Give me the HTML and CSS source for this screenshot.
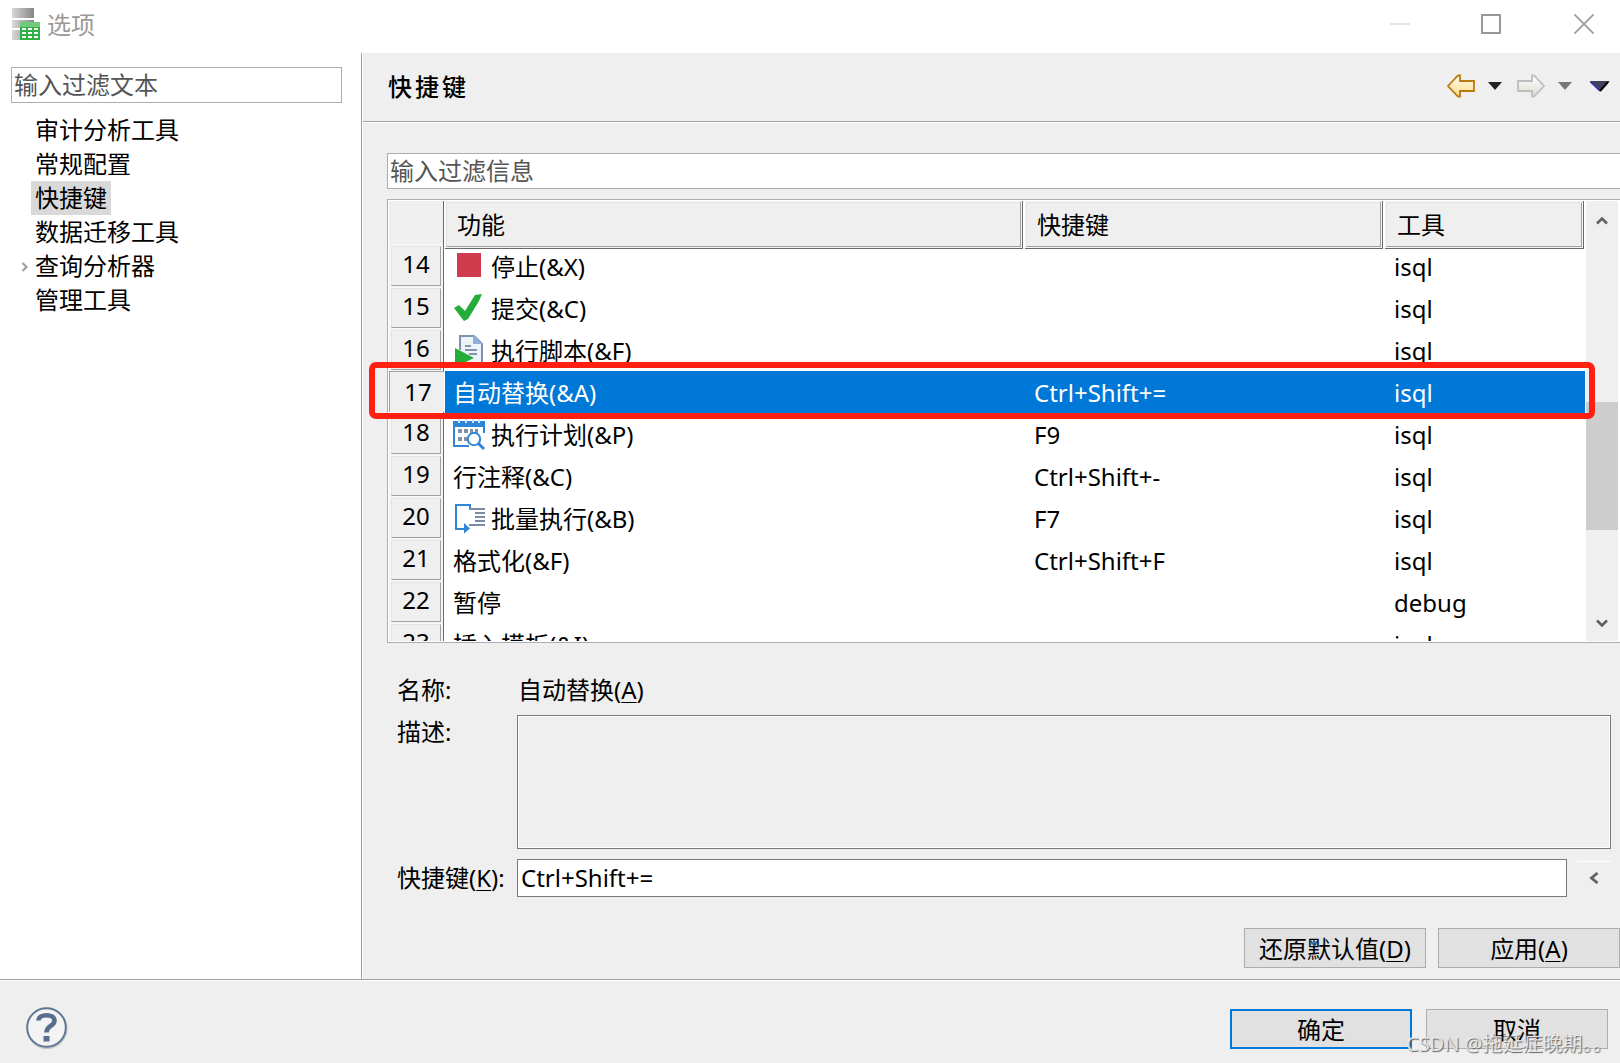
FILE: index.html
```html
<!DOCTYPE html>
<html lang="zh-CN">

<head>
    <meta charset="UTF-8">
    <title>选项</title>
    <link rel="stylesheet" href="styles.css">
</head>

<body>
    <!--标题栏-->
    <div class="titlebar">
        <svg class="logo" width="28" height="32" viewBox="0 0 28 32">
            <defs>
                <linearGradient id="metal">
                    <stop offset="0" stop-color="#d8d8d8" />
                    <stop offset="1" stop-color="#858585" />
                </linearGradient>
            </defs>
            <path fill="url(#metal)" d="M0 0h22v10H0zM0 12h22v8H0zM0 22h12v10H0z" />
            <path fill="#31b045" d="M8 14h20v18H8z" />
            <path fill="#70cc7c" d="M8 14h20v5H8z" />
            <path fill="#fff" d="M10 20h4v2h-4zM16 20h4v2h-4zM22 20h4v2h-4zM10 24h4v2h-4zM16 24h4v2h-4zM22 24h4v2h-4zM10 28h4v2h-4zM16 28h4v2h-4zM22 28h4v2h-4z" />
        </svg>
        <span class="caption">选项</span>
        <div class="win-btns">
            <svg width="20" height="20"><path d="M0 10h20" stroke="#e6e6e6" stroke-width="2" /></svg>
            <svg width="20" height="20"><path d="M1 1h18v18H1z" fill="none" stroke="#999" stroke-width="2" /></svg>
            <svg width="20" height="20"><path d="M.5.5l19 19M19.5.5l-19 19" stroke="#999" stroke-width="1.7" /></svg>
        </div>
    </div>

    <div class="main">
        <!--左侧树-->
        <div class="side">
            <div class="filter">输入过滤文本</div>
            <ul class="tree">
                <li><span>审计分析工具</span></li>
                <li><span>常规配置</span></li>
                <li class="current"><span>快捷键</span></li>
                <li><span>数据迁移工具</span></li>
                <li>
                    <svg class="expand" width="8" height="10"><path d="M1.5 1l4 4-4 4" fill="none" stroke="#a0a0a0" stroke-width="2.2" /></svg>
                    <span>查询分析器</span>
                </li>
                <li><span>管理工具</span></li>
            </ul>
        </div>

        <!--右侧内容-->
        <div class="content">
            <div class="head">
                <h1>快捷键</h1>
                <div class="nav">
                    <svg width="28" height="24" viewBox="0 0 28 24">
                        <defs>
                            <linearGradient id="gold" x2="0" y2="1">
                                <stop offset="0" stop-color="#fffdf0" />
                                <stop offset="1" stop-color="#fbdc86" />
                            </linearGradient>
                        </defs>
                        <path d="M1 12L11 1.5h2V7h14v10H13v5.500h-2z" fill="url(#gold)" stroke="#b97a10" stroke-width="1.800" />
                    </svg>
                    <svg width="14" height="8"><path d="M0 0h14L7 8z" fill="#222" /></svg>
                    <svg width="28" height="24" viewBox="0 0 28 24">
                        <defs>
                            <linearGradient id="silver" x2="0" y2="1">
                                <stop offset="0" stop-color="#fff" />
                                <stop offset="1" stop-color="#dddbd0" />
                            </linearGradient>
                        </defs>
                        <path d="M27 12L17 1.500h-2V7H1v10h14v5.500h2z" fill="url(#silver)" stroke="#bebebe" stroke-width="1.800" />
                    </svg>
                    <svg width="14" height="8"><path d="M0 0h14L7 8z" fill="#77787a" /></svg>
                    <svg width="20" height="11">
                        <path d="M0 0h20L10 10z" fill="#40405f" />
                        <path d="M0 .5L10 10" stroke="#3030b0" stroke-width="1.500" />
                        <path d="M18 1l-8 9" stroke="#000" stroke-width="2" />
                    </svg>
                </div>
            </div>

            <div class="filter wide">输入过滤信息</div>

            <div class="list">
                <div class="grid">
                    <div class="row thead">
                        <div class="num"></div>
                        <div class="th"><b>功能</b></div>
                        <div class="th"><b>快捷键</b></div>
                        <div class="th"><b>工具</b></div>
                    </div>
                    <div class="row">
                        <div class="num"><b>14</b></div>
                        <div class="name">
                            <svg class="ico" width="32" height="32"><path d="M4 2h24v24H4z" fill="#d03c4e" /></svg>停止(&amp;X)
                        </div>
                        <div></div>
                        <div>isql</div>
                    </div>
                    <div class="row">
                        <div class="num"><b>15</b></div>
                        <div class="name">
                            <svg class="ico" width="32" height="32"><path d="M1 15l5-3 6 6L22 2l7-1-3 7-11 18-4 2z" fill="#25ad3a" /></svg>提交(&amp;C)
                        </div>
                        <div></div>
                        <div>isql</div>
                    </div>
                    <div class="row">
                        <div class="num"><b>16</b></div>
                        <div class="name">
                            <svg class="ico" width="32" height="32">
                                <path d="M7 15V1h14l8 8v22H7" fill="#eef3f9" stroke="#7c92b0" stroke-width="2" />
                                <path d="M20 0l10 9H20z" fill="#8fb0dc" />
                                <path d="M12 11h6M12 15h12M16 19h8" stroke="#8494ae" stroke-width="2" />
                                <path d="M2 13l19 10L2 32z" fill="#25ad3a" />
                            </svg>执行脚本(&amp;F)
                        </div>
                        <div></div>
                        <div>isql</div>
                    </div>
                    <div class="row selected">
                        <div class="num"><b>17</b></div>
                        <div class="name">自动替换(&amp;A)</div>
                        <div class="key">Ctrl+Shift+=</div>
                        <div>isql</div>
                    </div>
                    <div class="row">
                        <div class="num"><b>18</b></div>
                        <div class="name">
                            <svg class="ico" width="32" height="32">
                                <path d="M16 27H1V3h30v11" fill="none" stroke="#2f86d8" stroke-width="2" />
                                <path d="M0 2h32v6H0z" fill="#2f86d8" />
                                <path d="M6 0v4M13 0v4M20 0v4M26 0v4" stroke="#cfe2f6" stroke-width="2" />
                                <path d="M5 12h4M11 12h4M17 12h3M22 12h3M5 20h4M11 20h3" stroke="#8190aa" stroke-width="4" />
                                <circle cx="21" cy="20" r="6.200" fill="#fff" stroke="#2f86d8" stroke-width="2" />
                                <path d="M25 24l6 6" stroke="#2f86d8" stroke-width="3" />
                            </svg>执行计划(&amp;P)
                        </div>
                        <div class="key">F9</div>
                        <div>isql</div>
                    </div>
                    <div class="row">
                        <div class="num"><b>19</b></div>
                        <div class="name">行注释(&amp;C)</div>
                        <div class="key">Ctrl+Shift+-</div>
                        <div>isql</div>
                    </div>
                    <div class="row">
                        <div class="num"><b>20</b></div>
                        <div class="name">
                            <svg class="ico" width="32" height="32">
                                <path d="M17 5V2H3v24h8" fill="none" stroke="#2f86d8" stroke-width="2" />
                                <path d="M11 20l6 5.500-6 5z" fill="#2f86d8" />
                                <path d="M16 6h16M22 10h10M22 14h10M22 18h10M16 22h16" stroke="#7b8ba6" stroke-width="2" />
                            </svg>批量执行(&amp;B)
                        </div>
                        <div class="key">F7</div>
                        <div>isql</div>
                    </div>
                    <div class="row">
                        <div class="num"><b>21</b></div>
                        <div class="name">格式化(&amp;F)</div>
                        <div class="key">Ctrl+Shift+F</div>
                        <div>isql</div>
                    </div>
                    <div class="row">
                        <div class="num"><b>22</b></div>
                        <div class="name">暂停</div>
                        <div></div>
                        <div>debug</div>
                    </div>
                    <div class="row">
                        <div class="num"><b>23</b></div>
                        <div class="name">插入模板(&amp;I)</div>
                        <div></div>
                        <div>isql</div>
                    </div>
                </div>
                <!--滚动条-->
                <div class="scroll">
                    <svg width="12" height="9"><path d="M1 7.500l5-5 5 5" fill="none" stroke="#606060" stroke-width="2.600" /></svg>
                    <div class="thumb"></div>
                    <svg width="12" height="9"><path d="M1 1.500l5 5 5-5" fill="none" stroke="#606060" stroke-width="2.600" /></svg>
                </div>
                <div class="mark"></div>
            </div>

            <!--详细信息-->
            <div class="detail">
                <label>名称:</label>
                <div class="value">自动替换(<u>A</u>)</div>
                <label>描述:</label>
                <div class="desc"></div>
                <label class="key-label">快捷键(<u>K</u>):</label>
                <div class="key-line">
                    <div class="key-input">Ctrl+Shift+=</div>
                    <div class="pick">
                        <svg width="10" height="12"><path d="M8.500 1l-6 5 6 5" fill="none" stroke="#606060" stroke-width="2.800" /></svg>
                    </div>
                </div>
            </div>

            <div class="btns">
                <div class="btn">还原默认值(<u>D</u>)</div>
                <div class="btn">应用(<u>A</u>)</div>
            </div>
        </div>
    </div>

    <!--底部-->
    <div class="footer">
        <svg class="help" width="42" height="42" viewBox="0 0 42 42">
            <circle cx="21" cy="21.500" r="19.500" fill="none" stroke="#c2c6c8" stroke-width="2" />
            <circle cx="20.500" cy="20.500" r="19.300" fill="#f3f3f3" stroke="#5f7596" stroke-width="1.900" />
            <path d="M12.500 13.500c0-7 16-7 16 0 0 6-8 5-8 12" fill="none" stroke="#5a6c8e" stroke-width="4.600" />
            <path d="M17.500 29h6v5.500h-6z" fill="#5a6c8e" />
        </svg>
        <div class="btn ok">确定</div>
        <div class="btn">取消</div>
    </div>
    <div class="watermark">CSDN @拖延症晚期。。</div>
</body>

</html>
```
FILE: styles.css
```css
* {
    margin: 0;
    padding: 0;
    box-sizing: border-box;
}

body {
    width: 1620px;
    height: 1063px;
    position: relative;
    overflow: hidden;
    display: flex;
    flex-direction: column;
    background: #efefef;
    color: #000;
    font: 24px/34px "Noto Sans", "Noto Sans CJK SC", sans-serif;
    white-space: nowrap;
}

svg {
    display: block;
    flex: none;
}

u {
    text-decoration-thickness: 1px;
    text-underline-offset: 3px;
}

.titlebar {
    height: 53px;
    padding: 8px 26px 0 12px;
    display: flex;
    background: #fff;
}

.caption {
    margin-left: 7px;
    color: #999;
}

.win-btns {
    margin: 6px 0 0 auto;
    display: flex;
    gap: 71px;
}

.win-btns svg:last-child {
    margin-left: 2px;
}

.main {
    height: 926px;
    display: flex;
}

.side {
    width: 362px;
    padding: 14px 19px 0 11px;
    background: #fff;
    border-right: 1px solid #a0a0a0;
}

.filter {
    height: 36px;
    padding-left: 2px;
    line-height: 33px;
    border: 1px solid #abadb3;
    background: #fff;
    color: #555;
}

.tree {
    list-style: none;
    margin-top: 10px;
    padding-left: 6px;
}

.tree li {
    height: 34px;
    padding-left: 14px;
    display: flex;
    align-items: center;
}

.tree span {
    padding: 0 4px;
    line-height: 34px;
}

.tree .current span {
    background: #d9d9d9;
}

.expand {
    margin: 2px 2px 0 -10px;
}

.content {
    flex: 1;
    min-width: 0;
    border-left: 1px solid #fff;
}

.head {
    height: 69px;
    padding: 0 10px 0 25px;
    display: flex;
    align-items: center;
    justify-content: space-between;
    border-bottom: 1px solid #a0a0a0;
    box-shadow: 0 1px 0 #fff;
}

h1 {
    font-size: 24px;
    font-weight: 500;
    letter-spacing: 3px;
}

.nav {
    margin-top: -2px;
    display: flex;
    align-items: center;
}

.nav svg:nth-child(2),
.nav svg:nth-child(4) {
    margin-left: 13px;
}

.nav svg:nth-child(3) {
    margin-left: 15px;
}

.nav svg:nth-child(5) {
    margin-left: 18px;
}

.wide {
    margin: 31px 0 0 24px;
    border-right: 0;
}

.list {
    position: relative;
    height: 444px;
    margin: 10px 0 0 24px;
    padding: 1px 0 1px 1px;
    display: flex;
    border: 1px solid #abadb3;
    border-right: 0;
    background: #fff;
}

.grid {
    width: 1197px;
    overflow: hidden;
}

.row {
    height: 42px;
    display: grid;
    grid-template-columns: 56px 580px 360px 200px;
    line-height: 45px;
}

.row > div {
    padding-left: 9px;
}

.row .name {
    padding-left: 8px;
    display: flex;
}

.ico {
    margin: 7px 6px 0 0;
}

.row .num,
.row .th {
    padding: 2px;
    margin-right: 1px;
    background: #f5f5f5;
    border-right: 1px solid #696969;
    border-bottom: 1px solid #696969;
}

.num b,
.th b {
    display: block;
    height: 100%;
    font-weight: normal;
    background: #efefef;
    border: 1px solid #e3e3e3;
    border-right-color: #a0a0a0;
    border-bottom-color: #a0a0a0;
}

.num b {
    line-height: 34px;
    text-align: center;
}

.thead {
    height: 43px;
}

.row .th {
    margin-right: 2px;
    padding: 1px;
}

.th b {
    padding-left: 10px;
    line-height: 43px;
}

.thead .num {
    background: #efefef;
}

.thead .th:last-child {
    margin-right: 1px;
}

.selected > div {
    margin: 1px 0;
    line-height: 43px;
    background: #0078d7;
    color: #fff;
}

.selected .num {
    margin: 1px 1px 1px 0;
    padding: 0;
    border: 1px solid #a0a0a0;
    border-width: 1px 0 1px 1px;
    background: #efefef;
    color: #000;
}

.selected .num b {
    border: 0;
    padding-left: 2px;
    line-height: 40px;
}

.scroll {
    width: 32px;
    padding: 15px 0 13px;
    display: flex;
    flex-direction: column;
    align-items: center;
    background: #efefef;
}

.thumb {
    width: 32px;
    height: 128px;
    margin: 177px 0 auto;
    background: #cdcdcd;
}

/* 红色标记框 */
.mark {
    position: absolute;
    left: -19px;
    top: 162px;
    width: 1226px;
    height: 57px;
    border: 6px solid #ff2012;
    border-radius: 7px;
}

.detail {
    padding: 30px 9px 0 34px;
    display: grid;
    grid-template-columns: 120px 1094px;
    grid-template-rows: 42px 144px 38px;
}

.value {
    padding-left: 1px;
}

.desc {
    height: 134px;
    border: 1px solid #7a7a7a;
    box-shadow: inset 0 0 0 1px #fff;
}

.key-label {
    line-height: 37px;
}

.key-line {
    display: flex;
    justify-content: space-between;
}

.key-input {
    width: 1050px;
    padding-left: 3px;
    line-height: 36px;
    border: 1px solid #7a7a7a;
    background: #fff;
}

.pick {
    width: 34px;
    height: 36px;
    margin-top: 2px;
    padding: 10px 0 0 12px;
    border-top: 1px solid #fff;
}

.btns {
    margin-top: 31px;
    display: flex;
    justify-content: flex-end;
    gap: 12px;
}

.btn {
    width: 182px;
    height: 40px;
    line-height: 40px;
    text-align: center;
    border: 1px solid #adadad;
    background: #e1e1e1;
}

.footer {
    flex: 1;
    padding: 29px 12px 0 26px;
    display: flex;
    gap: 14px;
    border-top: 1px solid #a0a0a0;
    box-shadow: inset 0 1px 0 #fff;
}

.help {
    margin: -2px auto 0 0;
}

.ok {
    border: 2px solid #0078d7;
    line-height: 38px;
}

.watermark {
    position: absolute;
    left: 1406px;
    top: 1027px;
    font-size: 20px;
    color: rgba(240, 240, 240, .85);
    text-shadow: 1px 1px 1px #666;
}
```
